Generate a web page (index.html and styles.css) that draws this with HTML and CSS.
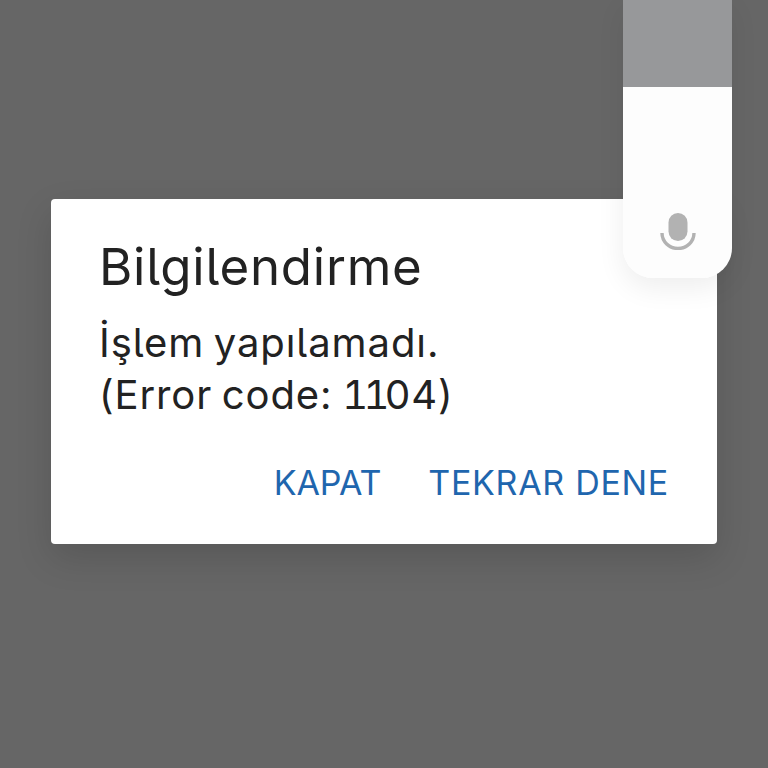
FILE: index.html
```html
<!DOCTYPE html>
<html lang="tr">
<head>
<meta charset="utf-8">
<title>Bilgilendirme</title>
<link rel="stylesheet" href="styles.css">
</head>
<body>
<main class="screen">
  <section class="dialog">
    <h1 class="title">Bilgilendirme</h1>
    <p class="message">İşlem yapılamadı.<br>(Error code: <span class="ones">11</span>04)</p>
    <div class="actions">
      <span class="action action-close">KAPAT</span>
      <span class="action">TEKRAR DENE</span>
    </div>
  </section>
  <aside class="voice">
    <div class="voice-level"></div>
    <div class="voice-body">
      <svg class="mic" viewBox="0 0 36 38" width="36" height="38">
        <rect x="8.5" y="1" width="19" height="28" rx="9.5" fill="#b2b2b2"/>
        <path d="M2 21a16 15.5 0 0 0 32 0" fill="none" stroke="#b2b2b2" stroke-width="3.4"/>
      </svg>
    </div>
  </aside>
</main>
</body>
</html>
```

FILE: styles.css
```css
* { box-sizing: border-box; }
html, body { margin: 0; height: 100%; }
body { font-family: "Inter", "Noto Sans", sans-serif; font-feature-settings: "cv05"; background: #666666; }
.screen { position: relative; width: 768px; height: 768px; overflow: hidden; padding: 199px 51px 0; }
.dialog {
  width: 666px; height: 345px; background: #fff; border-radius: 4px;
  padding: 38px 48px 0;
  display: flex; flex-direction: column;
  box-shadow: 0 14px 36px rgba(0,0,0,0.14);
}
.title { margin: 0; font-size: 51px; line-height: 60px; font-weight: 400; letter-spacing: 0.75px; color: #222; }
.message { margin: 20px 0 0; font-size: 40px; line-height: 52px; letter-spacing: 0.9px; word-spacing: -2.5px; color: #222; }
.ones { font-feature-settings: "cv05", "tnum"; letter-spacing: -4.5px; }
.actions { display: flex; justify-content: flex-end; gap: 47px; margin-top: 40px; }
.action { font-size: 34px; line-height: 44px; letter-spacing: 0.7px; color: #1f66ae; }
.action-close { letter-spacing: -0.1px; }
.voice {
  position: absolute; top: 0; left: 623px; width: 109px; height: 278px;
  border-radius: 0 0 30px 30px;
  display: flex; flex-direction: column;
  box-shadow: 0 10px 28px rgba(0,0,0,0.07);
}
.voice-level { height: 87px; background: #97989a; }
.voice-body { flex: 1; background: #fdfdfd; border-radius: 0 0 30px 30px; display: flex; justify-content: center; align-items: flex-end; padding-bottom: 28px; }
.mic { display: block; }
```
